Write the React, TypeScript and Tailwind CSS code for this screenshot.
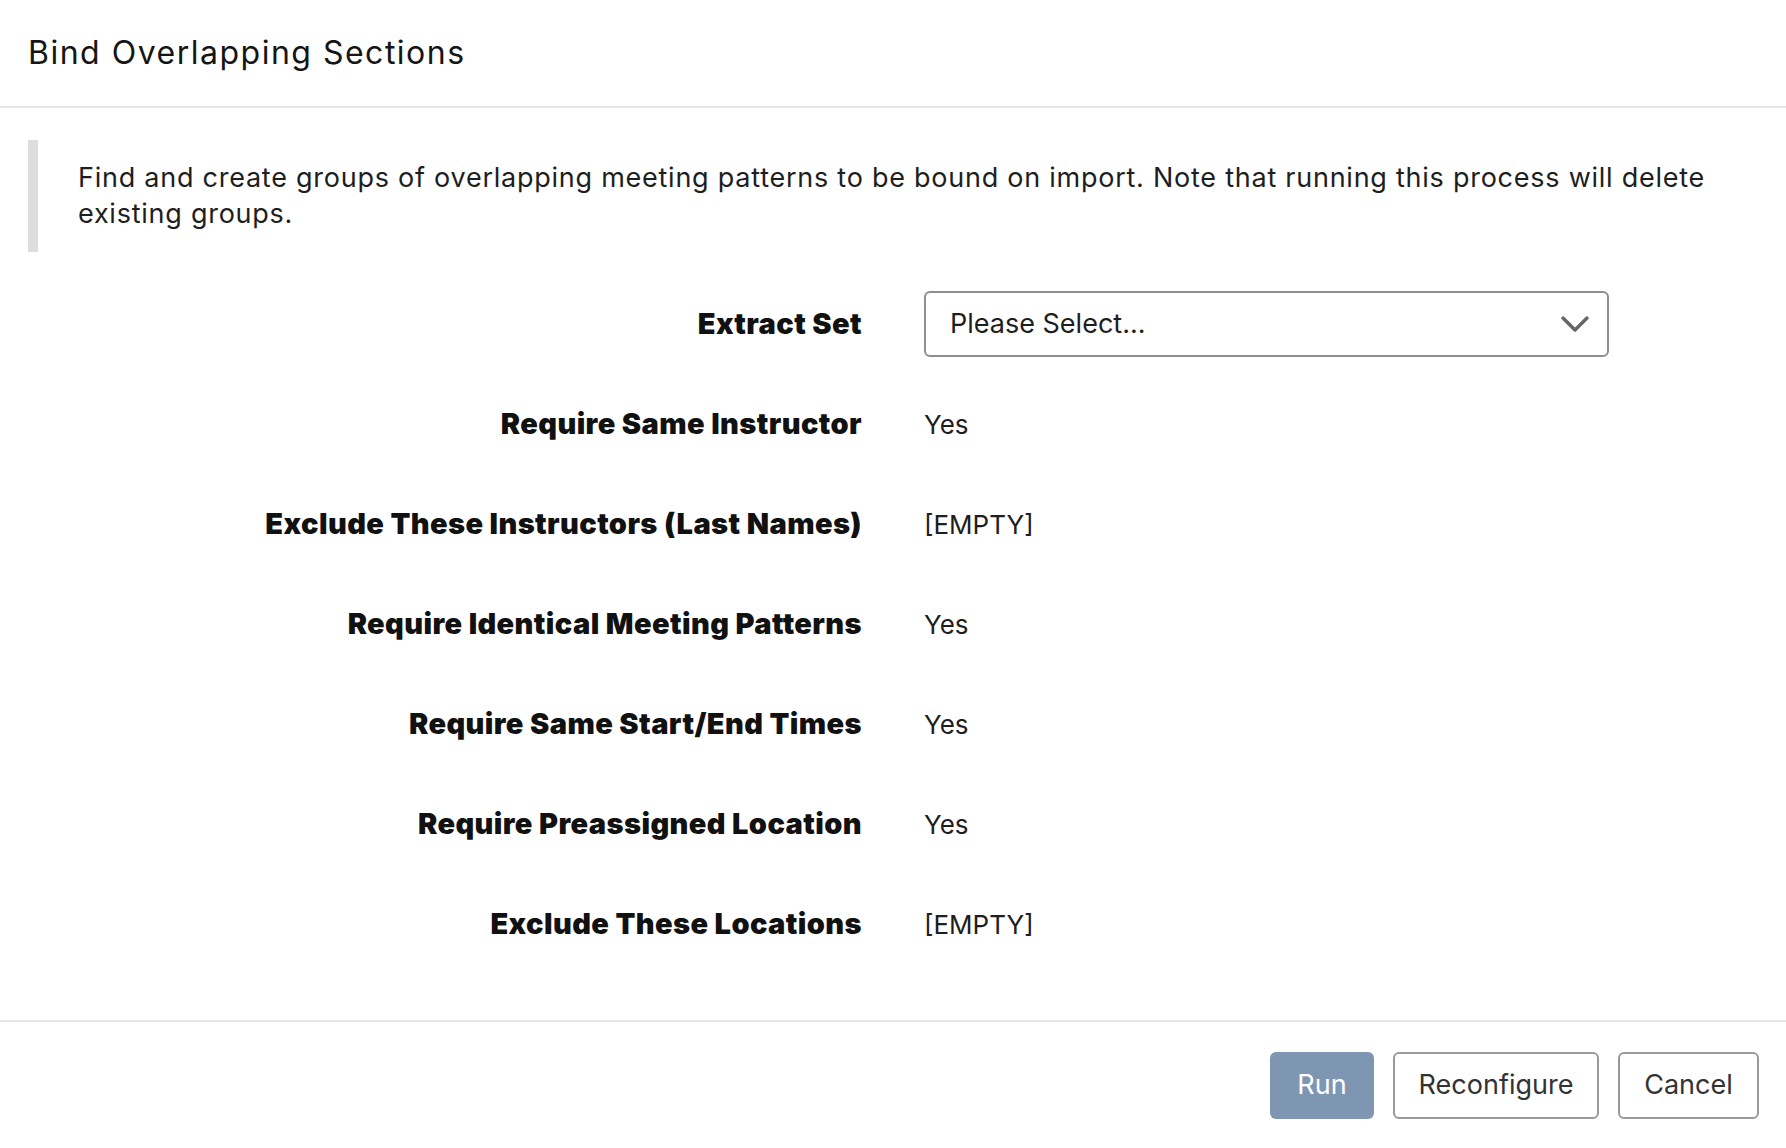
import React from "react";

const rows: { label: string; value: string }[] = [
  { label: "Require Same Instructor", value: "Yes" },
  { label: "Exclude These Instructors (Last Names)", value: "[EMPTY]" },
  { label: "Require Identical Meeting Patterns", value: "Yes" },
  { label: "Require Same Start/End Times", value: "Yes" },
  { label: "Require Preassigned Location", value: "Yes" },
  { label: "Exclude These Locations", value: "[EMPTY]" },
];

export default function App() {
  return (
    <div className="w-[1786px] h-[1148px] bg-white font-['Inter',sans-serif] text-[#1c1c1c] flex flex-col overflow-hidden">
      {/* Header */}
      <div className="h-[108px] flex items-center px-[28px] border-b-2 border-[#e6e6e6] shrink-0">
        <h1 className="text-[32px] leading-none font-normal tracking-[1.5px] text-[#151515]">Bind Overlapping Sections</h1>
      </div>

      {/* Body */}
      <div className="flex-1 px-[28px] pt-[32px]">
        <div className="border-l-[10px] border-[#dddddd] pl-[40px] py-[20px] pr-[20px]">
          <p className="text-[27px] leading-[36px] tracking-[0.75px] text-[#1e1e1e]">
            Find and create groups of overlapping meeting patterns to be bound on import. Note that running this process will delete
            <br />
            existing groups.
          </p>
        </div>

        <div className="mt-[22px] grid grid-cols-[834px_1fr] gap-x-[62px]">
          <div className="h-[100px] flex items-center justify-end">
            <span className="text-[29px] font-black tracking-[0.4px] text-[#111]">Extract Set</span>
          </div>
          <div className="h-[100px] flex items-center">
            <div className="w-[685px] h-[66px] border-2 border-[#8e8e8e] rounded-[6px] flex items-center justify-between pl-[24px] pr-[17px]">
              <span className="text-[27px] text-[#1e1e1e]">Please Select...</span>
              <svg width="30" height="18" viewBox="0 0 30 18" fill="none">
                <path d="M3 3 L15 15 L27 3" stroke="#666" strokeWidth="3.5" strokeLinecap="round" strokeLinejoin="round" />
              </svg>
            </div>
          </div>
          {rows.map((r) => (
            <React.Fragment key={r.label}>
              <div className="h-[100px] flex items-center justify-end">
                <span className="text-[29px] font-black tracking-[0.4px] text-[#111]">{r.label}</span>
              </div>
              <div className="h-[100px] flex items-center">
                <span className="text-[26px] text-[#1e1e1e]">{r.value}</span>
              </div>
            </React.Fragment>
          ))}
        </div>
      </div>

      {/* Footer */}
      <div className="h-[128px] border-t-2 border-[#e6e6e6] flex items-start justify-end gap-[19px] pt-[30px] pr-[27px] shrink-0">
        <button className="h-[67px] w-[104px] rounded-[6px] bg-[#7f96b2] text-white text-[27px]">Run</button>
        <button className="h-[67px] w-[206px] rounded-[6px] border-2 border-[#999] bg-white text-[#333] text-[27px]">Reconfigure</button>
        <button className="h-[67px] w-[141px] rounded-[6px] border-2 border-[#999] bg-white text-[#333] text-[27px]">Cancel</button>
      </div>
    </div>
  );
}
